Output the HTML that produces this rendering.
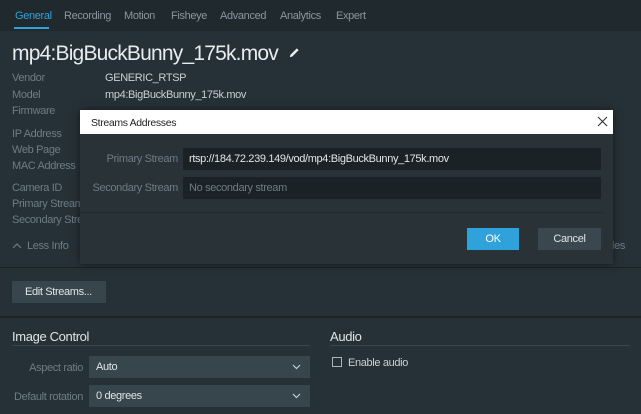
<!DOCTYPE html>
<html><head><style>
*{margin:0;padding:0;box-sizing:border-box}
body{width:641px;height:414px;background:#263137;font-family:"Liberation Sans",sans-serif;color:#c8d0d4;position:relative;overflow:hidden;font-size:11px;letter-spacing:-0.35px}
.a{position:absolute;white-space:nowrap}
.lbl{color:#6e7c84}
.r{text-align:right}
</style></head><body>
<div class="a" style="left:0;top:0;width:641px;height:31px;background:#1f292e"></div>
<div class="a" style="top:10px;left:15px;color:#2fa3d8">General</div>
<div class="a" style="left:14px;top:27px;width:35px;height:2px;background:#2fa3d8"></div>
<div class="a" style="top:10px;left:64px;color:#8a979e">Recording</div>
<div class="a" style="top:10px;left:124px;color:#8a979e">Motion</div>
<div class="a" style="top:10px;left:171px;color:#8a979e">Fisheye</div>
<div class="a" style="top:10px;left:220px;color:#8a979e">Advanced</div>
<div class="a" style="top:10px;left:280px;color:#8a979e">Analytics</div>
<div class="a" style="top:10px;left:336px;color:#8a979e">Expert</div>
<div class="a" style="top:42px;left:12px;font-size:21px;color:#e8ecee;letter-spacing:-0.8px">mp4:BigBuckBunny_175k.mov</div>
<svg class="a" style="left:288px;top:46px" width="13" height="13" viewBox="0 0 14 14"><path d="M2 12 L2.5 9.5 L9.5 2.5 L11.5 4.5 L4.5 11.5 Z" fill="#e8ecee"/></svg>
<div class="a lbl" style="top:72px;left:12px">Vendor</div><div class="a" style="top:72px;left:105px">GENERIC_RTSP</div>
<div class="a lbl" style="top:89px;left:12px">Model</div><div class="a" style="top:89px;left:105px">mp4:BigBuckBunny_175k.mov</div>
<div class="a lbl" style="top:105px;left:12px">Firmware</div>
<div class="a lbl" style="top:128px;left:12px">IP Address</div>
<div class="a lbl" style="top:144px;left:12px">Web Page</div>
<div class="a lbl" style="top:160px;left:12px">MAC Address</div>
<div class="a lbl" style="top:182px;left:12px">Camera ID</div>
<div class="a lbl" style="top:198px;left:12px">Primary Stream</div>
<div class="a lbl" style="top:214px;left:12px">Secondary Stream</div>
<svg class="a" style="left:12px;top:242px" width="10" height="8" viewBox="0 0 10 8"><path d="M1 6 L5 2 L9 6" stroke="#6e7c84" fill="none" stroke-width="1.2"/></svg>
<div class="a lbl" style="top:240px;left:27px">Less Info</div>
<div class="a lbl" style="top:240px;left:612px">les</div>
<div class="a" style="left:0;top:267px;width:641px;height:1px;background:#1a2226"></div>
<div class="a" style="left:12px;top:281px;width:94px;height:22px;background:#37454c;color:#dfe5e8;padding:5px 0 0 13px">Edit Streams...</div>
<div class="a" style="left:0;top:316px;width:641px;height:2px;background:#1c2428"></div>
<div class="a" style="top:329px;left:12px;font-size:13px;color:#dfe5e8">Image Control</div>
<div class="a" style="left:12px;top:345px;width:298px;height:1px;background:#3a464c"></div>
<div class="a" style="top:329px;left:330px;font-size:13px;color:#dfe5e8">Audio</div>
<div class="a" style="left:330px;top:345px;width:300px;height:1px;background:#3a464c"></div>
<div class="a lbl r" style="top:362px;left:0;width:83px">Aspect ratio</div>
<div class="a" style="left:89px;top:356px;width:221px;height:22px;background:#37454c;color:#dfe5e8;padding:5px 0 0 7px">Auto</div>
<svg class="a" style="left:292px;top:364px" width="9" height="6" viewBox="0 0 9 6"><path d="M1 1 L4.5 4.5 L8 1" stroke="#c8d0d4" fill="none" stroke-width="1.2"/></svg>
<div class="a lbl r" style="top:391px;left:0;width:83px">Default rotation</div>
<div class="a" style="left:89px;top:385px;width:221px;height:22px;background:#37454c;color:#dfe5e8;padding:5px 0 0 7px">0 degrees</div>
<svg class="a" style="left:292px;top:393px" width="9" height="6" viewBox="0 0 9 6"><path d="M1 1 L4.5 4.5 L8 1" stroke="#c8d0d4" fill="none" stroke-width="1.2"/></svg>
<div class="a" style="left:332px;top:357px;width:10px;height:10px;border:1px solid #aab4b9"></div>
<div class="a" style="top:357px;left:348px">Enable audio</div>
<!-- dialog -->
<div class="a" style="left:80px;top:110px;width:533px;height:154px;background:#283237;box-shadow:0 0 8px rgba(0,0,0,.5)"></div>
<div class="a" style="left:80px;top:110px;width:533px;height:24px;background:#fff;color:#222;padding:7px 0 0 11px;font-size:10.5px">Streams Addresses</div>
<svg class="a" style="left:597px;top:116px" width="11" height="11" viewBox="0 0 11 11"><path d="M1 1 L10 10 M10 1 L1 10" stroke="#333" stroke-width="1.1"/></svg>
<div class="a lbl r" style="top:153px;left:80px;width:98px">Primary Stream</div>
<div class="a" style="left:183px;top:148px;width:418px;height:22px;background:#1b2226;color:#dfe5e8;padding:5px 0 0 6px">rtsp://184.72.239.149/vod/mp4:BigBuckBunny_175k.mov</div>
<div class="a lbl r" style="top:182px;left:80px;width:98px">Secondary Stream</div>
<div class="a" style="left:183px;top:177px;width:418px;height:22px;background:#1b2226;color:#6e7c84;padding:5px 0 0 6px">No secondary stream</div>
<div class="a" style="left:80px;top:212px;width:523px;height:1px;background:#1f282c"></div>
<div class="a" style="left:467px;top:228px;width:52px;height:22px;background:#2fa2db;color:#fff;text-align:center;padding-top:5px">OK</div>
<div class="a" style="left:538px;top:228px;width:63px;height:22px;background:#3a474e;color:#dfe5e8;text-align:center;padding-top:5px">Cancel</div>
</body></html>
